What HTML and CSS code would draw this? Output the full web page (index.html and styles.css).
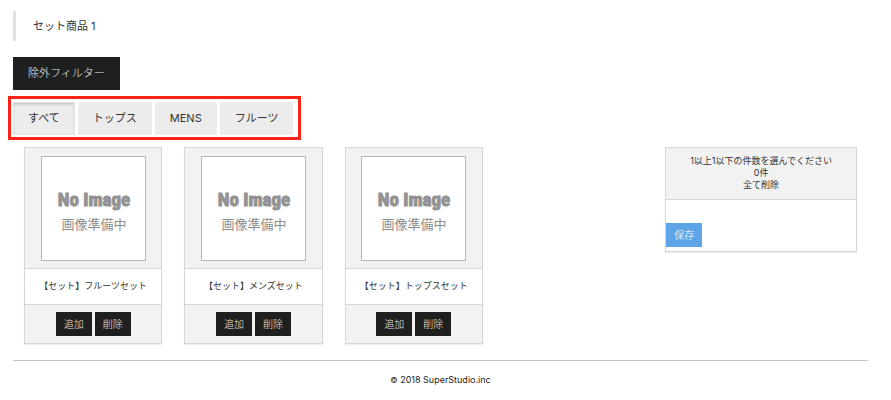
FILE: index.html
```html
<!DOCTYPE html>
<html lang="ja">
<head>
    <meta charset="UTF-8">
    <meta name="viewport" content="width=device-width, initial-scale=1.0">
    <title>セット商品 1</title>
    <link rel="stylesheet" href="styles.css">
</head>
<body>
    <h1 class="page-title">セット商品 1</h1>

    <button type="button" class="btn btn-dark">除外フィルター</button>

    <div class="tabs">
        <button type="button" class="btn btn-tab active">すべて</button>
        <button type="button" class="btn btn-tab">トップス</button>
        <button type="button" class="btn btn-tab">MENS</button>
        <button type="button" class="btn btn-tab">フルーツ</button>
    </div>

    <main class="content">
        <div class="products">
            <div class="card">
                <div class="card-image">
                    <svg class="thumb" viewBox="0 0 105 105">
                        <rect class="noimage-frame" x="0.5" y="0.5" width="104" height="104"/>
                        <text class="noimage-en" x="53" y="50">No Image</text>
                        <text class="noimage-ja" x="53" y="73">画像準備中</text>
                    </svg>
                </div>
                <p class="card-name">【セット】フルーツセット</p>
                <div class="card-actions">
                    <button type="button" class="btn btn-dark btn-small">追加</button>
                    <button type="button" class="btn btn-dark btn-small">削除</button>
                </div>
            </div>
            <div class="card">
                <div class="card-image">
                    <svg class="thumb" viewBox="0 0 105 105">
                        <rect class="noimage-frame" x="0.5" y="0.5" width="104" height="104"/>
                        <text class="noimage-en" x="53" y="50">No Image</text>
                        <text class="noimage-ja" x="53" y="73">画像準備中</text>
                    </svg>
                </div>
                <p class="card-name">【セット】メンズセット</p>
                <div class="card-actions">
                    <button type="button" class="btn btn-dark btn-small">追加</button>
                    <button type="button" class="btn btn-dark btn-small">削除</button>
                </div>
            </div>
            <div class="card">
                <div class="card-image">
                    <svg class="thumb" viewBox="0 0 105 105">
                        <rect class="noimage-frame" x="0.5" y="0.5" width="104" height="104"/>
                        <text class="noimage-en" x="53" y="50">No Image</text>
                        <text class="noimage-ja" x="53" y="73">画像準備中</text>
                    </svg>
                </div>
                <p class="card-name">【セット】トップスセット</p>
                <div class="card-actions">
                    <button type="button" class="btn btn-dark btn-small">追加</button>
                    <button type="button" class="btn btn-dark btn-small">削除</button>
                </div>
            </div>
        </div>

        <aside class="selection">
            <div class="card">
                <div class="selection-head">
                    <div>1以上1以下の件数を選んでください</div>
                    <div>0件</div>
                    <a href="#">全て削除</a>
                </div>
                <div class="selection-body">
                    <button type="button" class="btn btn-blue btn-small">保存</button>
                </div>
            </div>
        </aside>
    </main>

    <footer class="footer"><span class="copy">©</span> 2018 SuperStudio.inc</footer>
</body>
</html>
```
FILE: styles.css
```css
* {
    box-sizing: border-box;
}

body {
    font-family: Inter, "Noto Sans CJK JP", sans-serif;
    font-size: 9px;
    line-height: 12px;
    color: #333;
    background-color: #fff;
    margin: 0;
    padding: 11px 23px 0 13px;
}

/* Page heading */
.page-title {
    margin: 0 0 16px;
    padding-left: 17px;
    border-left: 3px solid #e0e0e0;
    font-size: 11px;
    font-weight: 400;
    line-height: 30px;
}

/* Buttons */
.btn {
    display: block;
    margin: 0;
    padding: 0 15px;
    border: none;
    font-family: inherit;
    font-size: 11px;
    line-height: 33px;
    cursor: pointer;
}

.btn-dark {
    background-color: #1f1f1f;
    color: #eee;
    font-weight: 300;
}

.btn-tab {
    background-color: #ececec;
    color: #333;
}

.btn-tab.active {
    box-shadow: inset 0 0 0 1px #e3e3e3, inset 0 2px 3px #bbb;
}

.btn-blue {
    background-color: #5fa4e6;
    color: #fff;
    font-weight: 300;
}

.btn-small {
    padding: 0 8px;
    font-size: 10px;
    line-height: 24px;
}

/* Category tabs in a red frame */
.tabs {
    display: flex;
    gap: 3px;
    width: fit-content;
    margin: 6px 0 7px -5px;
    padding: 3px 5px 2px 2px;
    border: 3px solid #fb2318;
}

/* Product list and selection box */
.content {
    display: grid;
    grid-template-columns: 3fr 1fr;
    align-items: start;
}

.products {
    display: grid;
    grid-template-columns: repeat(4, 1fr);
}

.card {
    margin: 0 11px;
    border: 1px solid #d6d6d6;
    box-shadow: 0 1px 1px #eee;
    text-align: center;
}

.card-image {
    padding: 8px 0 7px;
    background-color: #f2f2f2;
}

/* Placeholder for products without a picture */
.thumb {
    display: block;
    width: 105px;
    height: 105px;
    margin: 0 auto;
}

.noimage-frame {
    fill: #fff;
    stroke: #b8b8b8;
}

.noimage-en {
    font-family: "Roboto Condensed", Roboto, sans-serif;
    font-size: 19px;
    font-weight: 700;
    text-anchor: middle;
    fill: #929292;
    stroke: #929292;
    stroke-width: 1px;
}

.noimage-ja {
    font-family: "Noto Sans CJK JP", sans-serif;
    font-size: 13px;
    text-anchor: middle;
    fill: #8c8c8c;
}

.card-name {
    margin: 0;
    padding-bottom: 1px;
    border-top: 1px solid #d6d6d6;
    border-bottom: 1px solid #d6d6d6;
    line-height: 34px;
    white-space: nowrap;
}

.card-actions {
    display: flex;
    justify-content: center;
    gap: 3px;
    padding: 7px 0;
    background-color: #f2f2f2;
}

.selection-head {
    padding: 7px 0 8px;
    border-bottom: 1px solid #d6d6d6;
    background-color: #f2f2f2;
}

.selection-head a {
    color: inherit;
    text-decoration: none;
}

.selection-body {
    padding: 23px 0 4px;
}

.footer {
    margin-top: 16px;
    padding: 13px 0;
    border-top: 1px solid #c4c4c4;
    color: #222;
    text-align: center;
}

.copy {
    font-size: 8px;
}
```
